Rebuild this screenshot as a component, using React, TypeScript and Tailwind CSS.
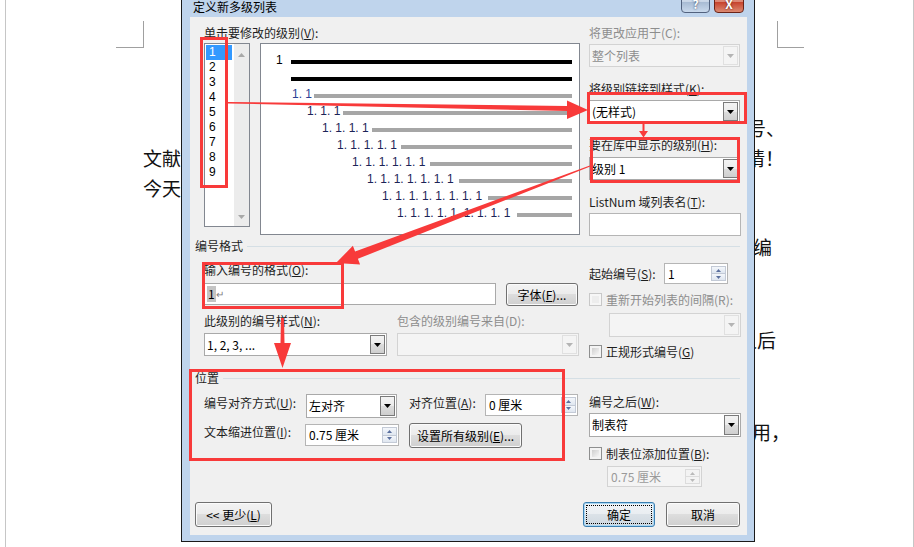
import React from "react";

const FONT = "font-['Noto_Sans_CJK_SC',sans-serif]";
const RED = "#f83a3a";
const BTN_BG = "bg-[linear-gradient(#f3f3f3_0%,#ebebeb_50%,#dddddd_50%,#cfcfcf_100%)]";

function Tri({ down = true, color = "#000", w = 7, h = 4 }: { down?: boolean; color?: string; w?: number; h?: number }) {
  return (
    <svg width={w} height={h} viewBox={`0 0 ${w} ${h}`}>
      <polygon points={down ? `0,0 ${w},0 ${w / 2},${h}` : `0,${h} ${w},${h} ${w / 2},0`} fill={color} />
    </svg>
  );
}

function L({ children, dis, cls = "" }: { children: React.ReactNode; dis?: boolean; cls?: string }) {
  return (
    <div className={`h-[16px] shrink-0 whitespace-nowrap text-[12px] leading-[16px] ${dis ? "text-[#8d8d8d]" : "text-[#1e1e1e]"} ${cls}`}>
      {children}
    </div>
  );
}

function Combo({ value, cls, dis }: { value?: string; cls: string; dis?: boolean }) {
  return (
    <div className={`flex shrink-0 border ${dis ? "border-[#d3d3d3] bg-[#f4f4f4]" : "border-[#a9a9a9] bg-white"} ${cls}`}>
      <div className={`flex flex-1 items-center pl-[2px] text-[12px] ${dis ? "text-[#8d8d8d]" : "text-black"}`}>{value}</div>
      <div
        className={`m-[1px] flex w-[15px] items-center justify-center border ${
          dis ? "border-[#e0e0e0] bg-[#f4f4f4]" : `border-[#7a7a7a] ${BTN_BG}`
        }`}
      >
        <Tri color={dis ? "#b4b4b4" : "#000"} />
      </div>
    </div>
  );
}

function Spin({ value, cls, dis }: { value: string; cls: string; dis?: boolean }) {
  const b = dis ? "border-[#dcdcdc] bg-[#f3f3f3]" : "border-[#c3cad6] bg-[linear-gradient(#f4f7fb,#dfe6f0)]";
  const tc = dis ? "#b9b9b9" : "#5a6f9e";
  return (
    <div className={`flex shrink-0 border ${dis ? "border-[#d3d3d3] bg-[#f4f4f4]" : "border-[#b5b5b5] bg-white"} ${cls}`}>
      <div className={`flex flex-1 items-center pl-[3px] text-[12px] ${dis ? "text-[#9a9a9a]" : "text-black"}`}>{value}</div>
      <div className="my-[2px] mr-[1px] flex w-[15px] flex-col">
        <div className={`flex flex-1 items-center justify-center border ${b}`}>
          <Tri down={false} color={tc} w={5} h={3} />
        </div>
        <div className={`flex flex-1 items-center justify-center border border-t-0 ${b}`}>
          <Tri color={tc} w={5} h={3} />
        </div>
      </div>
    </div>
  );
}

function Check({ dis }: { dis?: boolean }) {
  return (
    <div className={`h-[13px] w-[13px] shrink-0 border p-[2px] ${dis ? "border-[#c8c8c8] bg-[#f6f6f6]" : "border-[#8e8f8f] bg-[#f4f4f4]"}`}>
      <div className={`h-full w-full ${dis ? "bg-[#ededed]" : "bg-[linear-gradient(135deg,#cfcfcf,#f7f7f7)]"}`} />
    </div>
  );
}

function Btn({ children, cls }: { children: React.ReactNode; cls: string }) {
  return (
    <div className={`flex shrink-0 items-center justify-center rounded-[3px] border border-[#707070] ${BTN_BG} text-[12px] text-black shadow-[inset_0_0_0_1px_#fbfbfb] ${cls}`}>
      {children}
    </div>
  );
}

function GroupHeader({ title, cls = "" }: { title: string; cls?: string }) {
  return (
    <div className={`ml-[5px] mr-[7px] flex h-[16px] items-center ${cls}`}>
      <span className="text-[12px] leading-[16px] text-[#1e1e1e]">{title}</span>
      <div className="ml-[4px] h-px flex-1 bg-[#d5dfe5]" />
    </div>
  );
}

const levels = [
  { pad: "w-[31px]", tw: "w-[22px]", t: "1. 1", c: "text-[#2b3f95]" },
  { pad: "w-[46px]", tw: "w-[36px]", t: "1. 1. 1", c: "text-[#1c2458]" },
  { pad: "w-[61px]", tw: "w-[50px]", t: "1. 1. 1. 1", c: "text-[#1c2458]" },
  { pad: "w-[76px]", tw: "w-[64px]", t: "1. 1. 1. 1. 1", c: "text-[#1c2458]" },
  { pad: "w-[91px]", tw: "w-[78px]", t: "1. 1. 1. 1. 1. 1", c: "text-[#1c2458]" },
  { pad: "w-[106px]", tw: "w-[92px]", t: "1. 1. 1. 1. 1. 1. 1", c: "text-[#1c2458]" },
  { pad: "w-[121px]", tw: "w-[106px]", t: "1. 1. 1. 1. 1. 1. 1. 1", c: "text-[#1c2458]" },
  { pad: "w-[136px]", tw: "w-[120px]", t: "1. 1. 1. 1. 1. 1. 1. 1. 1", c: "text-[#1c2458]" },
];

function Preview() {
  return (
    <div className="ml-[10px] flex h-[192px] w-[320px] shrink-0 flex-col border border-[#828790] bg-white pt-[9px] font-['Liberation_Sans',sans-serif] text-[12px]">
      <div className="flex h-[17px] items-center">
        <div className="w-[15px] shrink-0" />
        <div className="w-[15px] shrink-0 pb-[3px] leading-[14px] text-black">1</div>
        <div className="mr-[7px] h-[4px] flex-1 bg-black" />
      </div>
      <div className="flex h-[17px] items-center">
        <div className="w-[30px] shrink-0" />
        <div className="mr-[7px] h-[4px] flex-1 bg-black" />
      </div>
      {levels.map((l) => (
        <div key={l.t} className="flex h-[17px] items-center">
          <div className={`${l.pad} shrink-0`} />
          <div className={`${l.tw} shrink-0 whitespace-nowrap pb-[3px] leading-[14px] ${l.c}`}>{l.t}</div>
          <div className="mr-[7px] h-[4px] flex-1 bg-[#a6a6a6]" />
        </div>
      ))}
    </div>
  );
}

function LevelList() {
  return (
    <div className="flex h-[184px] w-[46px] shrink-0 border border-[#828790] bg-white">
      <div className="flex w-[29px] flex-col pt-[1px] font-['Liberation_Sans',sans-serif] text-[12px] leading-[15px]">
        <div className="ml-[1px] h-[15px] w-[26px] bg-[#3399ff] pl-[3px] leading-[15px] text-white">1</div>
        {["2", "3", "4", "5", "6", "7", "8", "9"].map((n) => (
          <div key={n} className="h-[15px] pl-[4px] leading-[15px] text-black">
            {n}
          </div>
        ))}
      </div>
      <div className="flex flex-1 flex-col items-center justify-between bg-[#ececec] pb-[7px] pt-[9px]">
        <Tri down={false} color="#a8a8a8" w={7} h={4} />
        <Tri color="#a8a8a8" w={7} h={4} />
      </div>
    </div>
  );
}

function Dialog() {
  return (
    <div className="absolute left-[181px] top-[-9px] flex h-[551px] w-[574px] flex-col border border-[#1a1a1a] bg-[#bfd4ec] pb-[6px] pl-[8px] pr-[7px]">
      {/* title bar */}
      <div className="flex h-[25px] shrink-0">
        <div className="ml-[3px] pt-[7px] text-[12px] leading-[16px] text-black">定义新多级列表</div>
        <div className="ml-auto mr-[3px] flex gap-[4px]">
          <div className="flex h-[21px] w-[29px] items-end justify-center rounded-b-[4px] border border-[#52627e] bg-[linear-gradient(#e4ebf4,#c6d4e6_50%,#a9bcd4_50%,#c9d9ec)] pb-[2px] text-[12px] font-bold leading-[12px] text-white [text-shadow:0_0_2px_#1b2a48]">
            ?
          </div>
          <div className="flex h-[21px] w-[30px] items-end justify-center rounded-b-[4px] border border-[#6b2418] bg-[linear-gradient(#eaa797,#d98371_50%,#c7452f_50%,#dc8a72)] pb-[2px] text-[12px] font-bold leading-[12px] text-white [text-shadow:0_0_2px_#4a0d05]">
            X
          </div>
        </div>
      </div>

      {/* client area */}
      <div className="flex flex-1 flex-col bg-[#f0f0f0]">
        {/* top section */}
        <div className="mt-[8px] flex items-start">
          <div className="ml-[14px] flex w-[376px] shrink-0 flex-col">
            <L>
              单击要修改的级别(<u>V</u>):
            </L>
            <div className="mt-[2px] flex items-start">
              <LevelList />
              <Preview />
            </div>
          </div>
          <div className="ml-[9px] flex w-[152px] shrink-0 flex-col">
            <L dis>将更改应用于(C):</L>
            <Combo dis value="整个列表" cls="mt-[3px] h-[23px] w-[151px]" />
            <L cls="mt-[14px]">
              将级别链接到样式(<u>K</u>):
            </L>
            <Combo value="(无样式)" cls="mt-[3px] h-[23px] w-[151px]" />
            <L cls="mt-[14px]">
              要在库中显示的级别(<u>H</u>):
            </L>
            <Combo value="级别 1" cls="mt-[4px] h-[23px] w-[151px]" />
            <L cls="mt-[14px]">
              ListNum 域列表名(<u>T</u>):
            </L>
            <div className="mt-[3px] h-[23px] w-[152px] border border-[#b5b5b5] bg-white" />
          </div>
        </div>

        <GroupHeader title="编号格式" cls="mt-[2px]" />

        {/* number format section */}
        <div className="flex items-start">
          <div className="ml-[14px] flex w-[375px] shrink-0 flex-col">
            <L cls="mt-[8px]">
              输入编号的格式(<u>O</u>):
            </L>
            <div className="mt-[5px] flex items-start">
              <div className="flex h-[22px] w-[292px] shrink-0 items-center border border-[#a9a9a9] bg-white pl-[2px] text-[12px]">
                <span className="bg-[#c4c4c4] px-[1px] leading-[16px] text-black">1</span>
                <span className="text-[10px] leading-[16px] text-[#808080]">↵</span>
              </div>
              <Btn cls="ml-[10px] h-[23px] w-[72px]">
                字体(<u>F</u>)...
              </Btn>
            </div>
            <div className="mt-[7px] flex">
              <L cls="w-[193px]">
                此级别的编号样式(<u>N</u>):
              </L>
              <L dis>包含的级别编号来自(D):</L>
            </div>
            <div className="mt-[4px] flex">
              <Combo value="1, 2, 3, ..." cls="h-[23px] w-[183px]" />
              <Combo dis cls="ml-[10px] h-[23px] w-[182px]" />
            </div>
          </div>
          <div className="ml-[10px] flex w-[152px] shrink-0 flex-col">
            <div className="mt-[9px] flex h-[21px] items-center">
              <L cls="w-[75px]">
                起始编号(<u>S</u>):
              </L>
              <Spin value="1" cls="h-[21px] w-[64px]" />
            </div>
            <div className="mt-[9px] flex h-[13px] items-center">
              <Check dis />
              <L dis cls="ml-[4px]">
                重新开始列表的间隔(R):
              </L>
            </div>
            <Combo dis cls="ml-[20px] mt-[7px] h-[24px] w-[132px]" />
            <div className="mt-[8px] flex h-[13px] items-center">
              <Check />
              <L cls="ml-[4px]">
                正规形式编号(<u>G</u>)
              </L>
            </div>
          </div>
        </div>

        <GroupHeader title="位置" cls="mt-[12px]" />

        {/* position section */}
        <div className="flex items-start">
          <div className="ml-[14px] flex w-[375px] shrink-0 flex-col">
            <div className="mt-[8px] flex items-start">
              <L cls="mt-[1px] w-[102px]">
                编号对齐方式(<u>U</u>):
              </L>
              <Combo value="左对齐" cls="h-[24px] w-[91px]" />
              <L cls="ml-[12px] mt-[1px] w-[76px]">
                对齐位置(<u>A</u>):
              </L>
              <Spin value="0 厘米" cls="h-[22px] w-[93px]" />
            </div>
            <div className="mt-[5px] flex items-start">
              <L cls="mt-[1px] w-[101px]">
                文本缩进位置(<u>I</u>):
              </L>
              <Spin value="0.75 厘米" cls="mt-[1px] h-[22px] w-[94px]" />
              <Btn cls="ml-[10px] h-[25px] w-[113px]">
                设置所有级别(<u>E</u>)...
              </Btn>
            </div>
          </div>
          <div className="ml-[10px] flex w-[152px] shrink-0 flex-col">
            <L cls="mt-[8px]">
              编号之后(<u>W</u>):
            </L>
            <Combo value="制表符" cls="mt-[3px] h-[24px] w-[152px]" />
            <div className="mt-[10px] flex h-[13px] items-center">
              <Check />
              <L cls="ml-[4px]">
                制表位添加位置(<u>B</u>):
              </L>
            </div>
            <Spin dis value="0.75 厘米" cls="ml-[18px] mt-[6px] h-[21px] w-[95px]" />
          </div>
        </div>

        {/* bottom buttons */}
        <div className="mt-[15px] flex items-start">
          <Btn cls="ml-[5px] h-[25px] w-[77px]">
            {"<< "}更少(<u>L</u>)
          </Btn>
          <div className="ml-auto flex h-[25px] w-[72px] shrink-0 rounded-[3px] border border-[#3c7fb1] bg-[linear-gradient(#f1f4f7_0%,#e9edf1_50%,#dbe2e8_50%,#cfd8e0_100%)] p-[2px] shadow-[inset_0_0_0_1px_#a9d8f5]">
            <div className="flex flex-1 items-center justify-center border border-dotted border-black text-[12px] text-black">
              确定
            </div>
          </div>
          <Btn cls="ml-[11px] mr-[7px] h-[25px] w-[74px]">取消</Btn>
        </div>
      </div>
    </div>
  );
}

function Doc() {
  const row = "flex h-[30px] items-center whitespace-nowrap text-[19px] leading-[30px] text-[#111]";
  return (
    <div className="ml-[5px] h-[547px] w-[909px] border-x border-[#c6c6c6]">
      <div className="flex h-[48px]">
        <div className="ml-[110px] mt-[21px] h-[27px] w-[28px] border-b border-r border-[#a0a0a0]" />
        <div className="ml-[633px] mt-[21px] h-[27px] w-[27px] border-b border-l border-[#a0a0a0]" />
      </div>
      <div className={`${row} mt-[65px]`}>
        <div className="w-[741px] shrink-0" />
        <span>号、</span>
      </div>
      <div className={row}>
        <div className="w-[137px] shrink-0" />
        <div className="w-[603px] shrink-0">文献</div>
        <span>请！</span>
      </div>
      <div className={row}>
        <div className="w-[137px] shrink-0" />
        <span>今天</span>
      </div>
      <div className={`${row} mt-[29px]`}>
        <div className="w-[747px] shrink-0" />
        <span>编</span>
      </div>
      <div className={`${row} mt-[63px]`}>
        <div className="w-[732px] shrink-0" />
        <span>之后</span>
      </div>
      <div className={`${row} mt-[62px]`}>
        <div className="w-[746px] shrink-0" />
        <span>用，</span>
      </div>
    </div>
  );
}

function Annotations() {
  return (
    <svg className="pointer-events-none absolute left-0 top-0" width={914} height={547} viewBox="0 0 914 547">
      <g fill="none" stroke={RED} strokeWidth={3}>
        <rect x={201.5} y={38.5} width={25} height={148} />
        <rect x={588.5} y={93.5} width={157} height={29} />
        <rect x={591.5} y={138.5} width={147} height={43} />
        <rect x={203.5} y={263.5} width={139} height={44} />
        <rect x={190.5} y={370.5} width={373} height={89} />
      </g>
      <g fill={RED}>
        <polygon points="228,102 567,106 567,100.5 588,110 567,119 567,111 228,103.5" />
        <polygon points="589.8,165.5 355.1,251.4 352.9,245.8 336,263 360.1,264.4 357.9,258.8 590.2,166.5" />
        <polygon points="642.5,124 644.5,124 644.5,131 648,131 643.5,137.5 639,131 642.5,131" />
        <polygon points="281,318 284,318 284.5,343 291,343 282.5,368 274,343 280.5,343" />
      </g>
    </svg>
  );
}

export default function App() {
  return (
    <div className={`relative h-[547px] w-[914px] overflow-hidden bg-white ${FONT}`}>
      <Doc />
      <Dialog />
      <Annotations />
    </div>
  );
}
